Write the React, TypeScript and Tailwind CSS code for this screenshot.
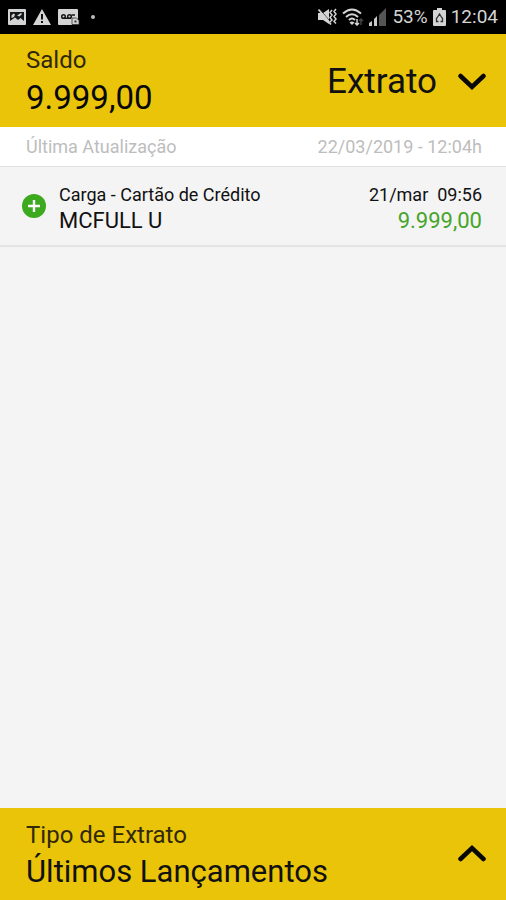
import React from 'react';

function ImageIcon() {
  return (
    <svg className="h-4 w-[18px]" viewBox="0 0 18 16" aria-hidden="true">
      <rect width="18" height="16" rx="1" fill="#d4d4d4" />
      <path d="M2 3h14v9l-3.500-3-2.500 2-3-2.500L2 12z" fill="#16191c" />
      <path d="M3.500 6.500l2-2 1.500 1-1 2.500-2.500 1zM9 6.500L13 4l1 1-2.500 2.500z" fill="#d4d4d4" />
    </svg>
  );
}

function WarningIcon() {
  return (
    <svg className="h-4 w-[18px]" viewBox="0 0 18 16" aria-hidden="true">
      <path d="M9 0l9 16H0z" fill="#d4d4d4" />
      <path d="M8 5h2v5.500H8zM8 12h2v2H8z" fill="#111" />
    </svg>
  );
}

function VoicemailIcon() {
  return (
    <svg className="h-4 w-[22px]" viewBox="0 0 22 16" aria-hidden="true">
      <path d="M1 0h18a1 1 0 0 1 1 1v9h-6v6H1a1 1 0 0 1-1-1V1a1 1 0 0 1 1-1z" fill="#d4d4d4" />
      <g fill="none" stroke="#151515" strokeWidth="1.500">
        <circle cx="5.500" cy="7.500" r="1.800" />
        <circle cx="11.500" cy="7.500" r="1.800" />
        <path d="M5.500 9.300h6M13.500 6h3.500" />
      </g>
      <path d="M14 9h4.500l2.500 2.500v4h-7z" fill="#d4d4d4" stroke="#333" strokeWidth="0.800" />
      <path d="M16.500 11.500h2v2h-2z" fill="#333" />
    </svg>
  );
}

function MuteIcon() {
  return (
    <svg className="h-[18px] w-5" viewBox="0 0 20 18" aria-hidden="true">
      <path d="M1 5h5l6-4v15l-6-4H1z" fill="#d4d4d4" />
      <path d="M3.500 2l11 13" stroke="#222" strokeWidth="0.800" />
      <path d="M1.500 1.500l12.500 15" stroke="#d4d4d4" strokeWidth="1.800" />
      <path d="M15 2l-2 2.500 2 2.500-2 2.500 2 2.500-2 2M19 1l-2 2.500 2 2.500-2 2.500 2 2.500-2 2.500 2 2" fill="none" stroke="#d4d4d4" strokeWidth="1.500" />
    </svg>
  );
}

function WifiIcon() {
  return (
    <svg className="h-[18px] w-[22px]" viewBox="0 0 22 18" aria-hidden="true">
      <g fill="none" stroke="#d4d4d4" strokeWidth="2">
        <path d="M1 5.500Q10 -2.500 19 5.500" />
        <path d="M4 9Q10 3.500 16 9" />
        <path d="M7 12Q10 9 13 12" />
      </g>
      <path d="M10 17l-2.500-2.500q2.500-2 5 0z" fill="#d4d4d4" />
      <path d="M15 11v6m-2-2l2 2 2-2" stroke="#d4d4d4" strokeWidth="1.500" fill="none" />
      <path d="M19 17v-6m-2 2l2-2 2 2" stroke="#444" strokeWidth="1.500" fill="none" />
    </svg>
  );
}

function SignalIcon() {
  return (
    <svg className="h-[18px] w-[18px]" viewBox="0 0 18 18" aria-hidden="true">
      <path d="M0 15l3-2v5H0zM5 11l3-3v10H5z" fill="#c8c8c8" />
      <path d="M10 7l2-2v13h-2zM12 5l5-5v18h-5z" fill="#555" />
    </svg>
  );
}

function BatteryIcon() {
  return (
    <svg className="h-[18px] w-[13px]" viewBox="0 0 13 18" aria-hidden="true">
      <path d="M4 0h5v2h3a1 1 0 0 1 1 1v14a1 1 0 0 1-1 1H1a1 1 0 0 1-1-1V3a1 1 0 0 1 1-1h3z" fill="#d4d4d4" />
      <path d="M4 10l2.500-4L9 10M3.500 9.500v4h2M9.500 9.500v4h-2" fill="none" stroke="#333" strokeWidth="1.300" />
    </svg>
  );
}

function Chevron({ up = false }: { up?: boolean }) {
  return (
    <svg className="h-5 w-7" viewBox="0 0 28 20" fill="none" stroke="#080808" strokeWidth="4.500" strokeLinecap="round" aria-hidden="true">
      <path d={up ? 'M2.500 16L14 5L25.500 16' : 'M2.500 4L14 15L25.500 4'} />
    </svg>
  );
}

export default function App() {
  return (
    <div className="flex min-h-screen flex-col bg-[#f4f4f4] font-[Roboto,sans-serif] text-[#111]">
      <div className="flex h-[34px] items-center justify-between bg-black px-2 text-[19px] leading-6 text-[#d4d4d4]">
        <div className="flex items-center gap-[7px]">
          <ImageIcon />
          <WarningIcon />
          <VoicemailIcon />
          <span className="ml-1 size-1 rounded-full bg-[#bbb]" />
        </div>
        <div className="flex items-center gap-[5px]">
          <MuteIcon />
          <WifiIcon />
          <SignalIcon />
          <span>53%</span>
          <BatteryIcon />
          <span>12:04</span>
        </div>
      </div>

      <header className="flex items-center justify-between bg-[#eac409] pt-2 pr-5 pb-[9px] pl-[26px]">
        <div>
          <p className="text-[24px] leading-9 text-[#302806]">Saldo</p>
          <p className="text-[33px] leading-10 text-[#080808]">9.999,00</p>
        </div>
        <button type="button" className="flex items-center gap-[21px] pt-1 text-[35px] leading-[42px] text-[#111]">
          Extrato
          <Chevron />
        </button>
      </header>

      <main className="flex-1">
        <div className="flex items-center justify-between border-b border-[#e2e2e2] bg-white pt-2 pb-[7px] pr-6 pl-[26px] text-[18px] leading-6 text-[#bdbdbd]">
          <span>Última Atualização</span>
          <time>22/03/2019 - 12:04h</time>
        </div>
        <ul>
          <li className="flex items-start border-b-2 border-[#e4e4e4] pt-[15px] pr-6 pb-[11px] pl-[22px]">
            <svg className="mt-3 size-6 shrink-0" viewBox="0 0 24 24" aria-hidden="true">
              <circle cx="12" cy="12" r="12" fill="#3da91f" />
              <path d="M12 6v12M6 12h12" stroke="#fff" strokeWidth="2.400" />
            </svg>
            <div className="ml-[13px] flex-1">
              <p className="text-[18px] leading-[26px]">Carga - Cartão de Crédito</p>
              <p className="text-[22px] leading-[26px]">MCFULL U</p>
            </div>
            <div className="text-right">
              <p className="text-[18px] leading-[26px] whitespace-pre">21/mar  09:56</p>
              <p className="text-[22px] leading-[26px] text-[#46a52b]">9.999,00</p>
            </div>
          </li>
        </ul>
      </main>

      <footer className="bg-[#eac409]">
        <button type="button" className="flex w-full items-center justify-between pt-2 pr-5 pb-[10px] pl-[26px] text-left">
          <span>
            <span className="block text-[24px] leading-[38px] text-[#302806]">Tipo de Extrato</span>
            <span className="block text-[31px] leading-9 text-[#111]">Últimos Lançamentos</span>
          </span>
          <Chevron up />
        </button>
      </footer>
    </div>
  );
}
